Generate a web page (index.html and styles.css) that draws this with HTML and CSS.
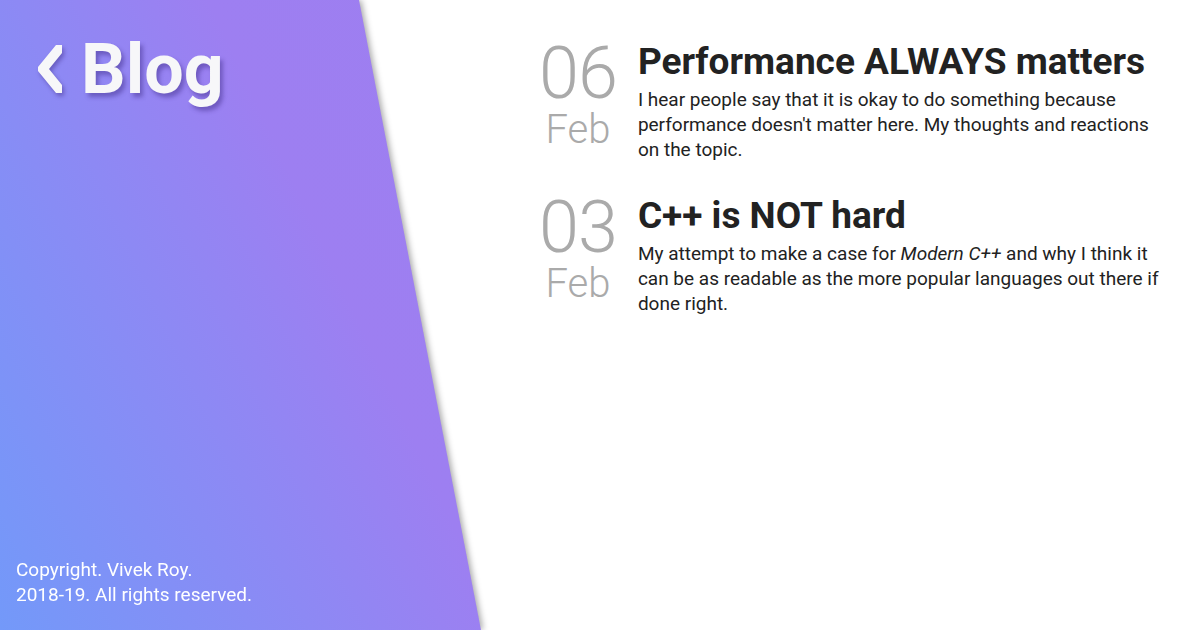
FILE: index.html
```html
<!DOCTYPE html>
<html lang="en">
<head>
<meta charset="utf-8">
<title>Blog</title>
<link rel="stylesheet" href="styles.css">
</head>
<body>
<div class="page">
  <div class="side-wrap">
    <aside class="side">
      <header class="brand">
        <svg class="chev" width="24" height="48" viewBox="0 0 24 48" aria-hidden="true">
          <polygon points="18,0 24,0 24,8 11,24 24,40 24,48 18,48 0,26 0,22" fill="#f7f7f9"/>
        </svg>
        <h1 class="brand-title">Blog</h1>
      </header>
      <footer class="copy">
        <p>Copyright. Vivek Roy.</p>
        <p>2018-19. All rights reserved.</p>
      </footer>
    </aside>
  </div>
  <main class="posts">
    <article class="post">
      <div class="date">
        <span class="day">06</span>
        <span class="month">Feb</span>
      </div>
      <div class="body">
        <h2 class="title">Performance ALWAYS matters</h2>
        <p class="desc">I hear people say that it is okay to do something because performance doesn't matter here. My thoughts and reactions on the topic.</p>
      </div>
    </article>
    <article class="post">
      <div class="date">
        <span class="day">03</span>
        <span class="month">Feb</span>
      </div>
      <div class="body">
        <h2 class="title">C++ is NOT hard</h2>
        <p class="desc">My attempt to make a case for <em>Modern C++</em> and why I think it can be as readable as the more popular languages out there if done right.</p>
      </div>
    </article>
  </main>
</div>
</body>
</html>
```

FILE: styles.css
```css
* { box-sizing: border-box; }
html, body { margin: 0; padding: 0; }
body {
  width: 1200px;
  height: 630px;
  overflow: hidden;
  background: #fff;
  font-family: Roboto, "Liberation Sans", sans-serif;
}
.page {
  display: flex;
  width: 1200px;
  height: 630px;
}
.side-wrap {
  flex: 0 0 481px;
  height: 630px;
  filter: drop-shadow(2px 0 3px rgba(0, 0, 0, 0.35));
}
.side {
  height: 100%;
  display: flex;
  flex-direction: column;
  justify-content: space-between;
  background: linear-gradient(65deg, #7399f9 0%, #9d7ff1 65%, #9e7ef0 100%);
  clip-path: polygon(0 0, 359px 0, 100% 100%, 0 100%);
}
.brand {
  display: flex;
  align-items: center;
  gap: 19px;
  padding: 27px 0 0 38px;
}
.chev {
  display: block;
  filter: drop-shadow(2px 3px 2px rgba(60, 40, 130, 0.45));
}
.brand-title {
  margin: 0;
  font-size: 70px;
  line-height: 84px;
  font-weight: 700;
  color: #f7f7f9;
  text-shadow: 3px 4px 4px rgba(60, 40, 130, 0.45);
}
.copy {
  padding: 0 0 23px 16px;
  color: #fff;
  font-size: 19px;
  line-height: 25px;
}
.copy p { margin: 0; }
.posts {
  flex: 1;
  display: flex;
  flex-direction: column;
  gap: 30px;
  padding: 38px 30px 0 58px;
}
.post {
  display: flex;
  gap: 21px;
}
.date {
  flex: 0 0 74px;
  display: flex;
  flex-direction: column;
  align-items: center;
  color: #aaaaaa;
  font-weight: 300;
}
.day {
  font-size: 72px;
  line-height: 72px;
  letter-spacing: -1px;
}
.month {
  font-size: 40px;
  line-height: 40px;
}
.body { flex: 1; }
.title {
  margin: 2px 0 3px;
  font-size: 37px;
  line-height: 44px;
  font-weight: 700;
  color: #222;
}
.desc {
  margin: 0;
  font-size: 19px;
  line-height: 25px;
  color: #222;
}
```
